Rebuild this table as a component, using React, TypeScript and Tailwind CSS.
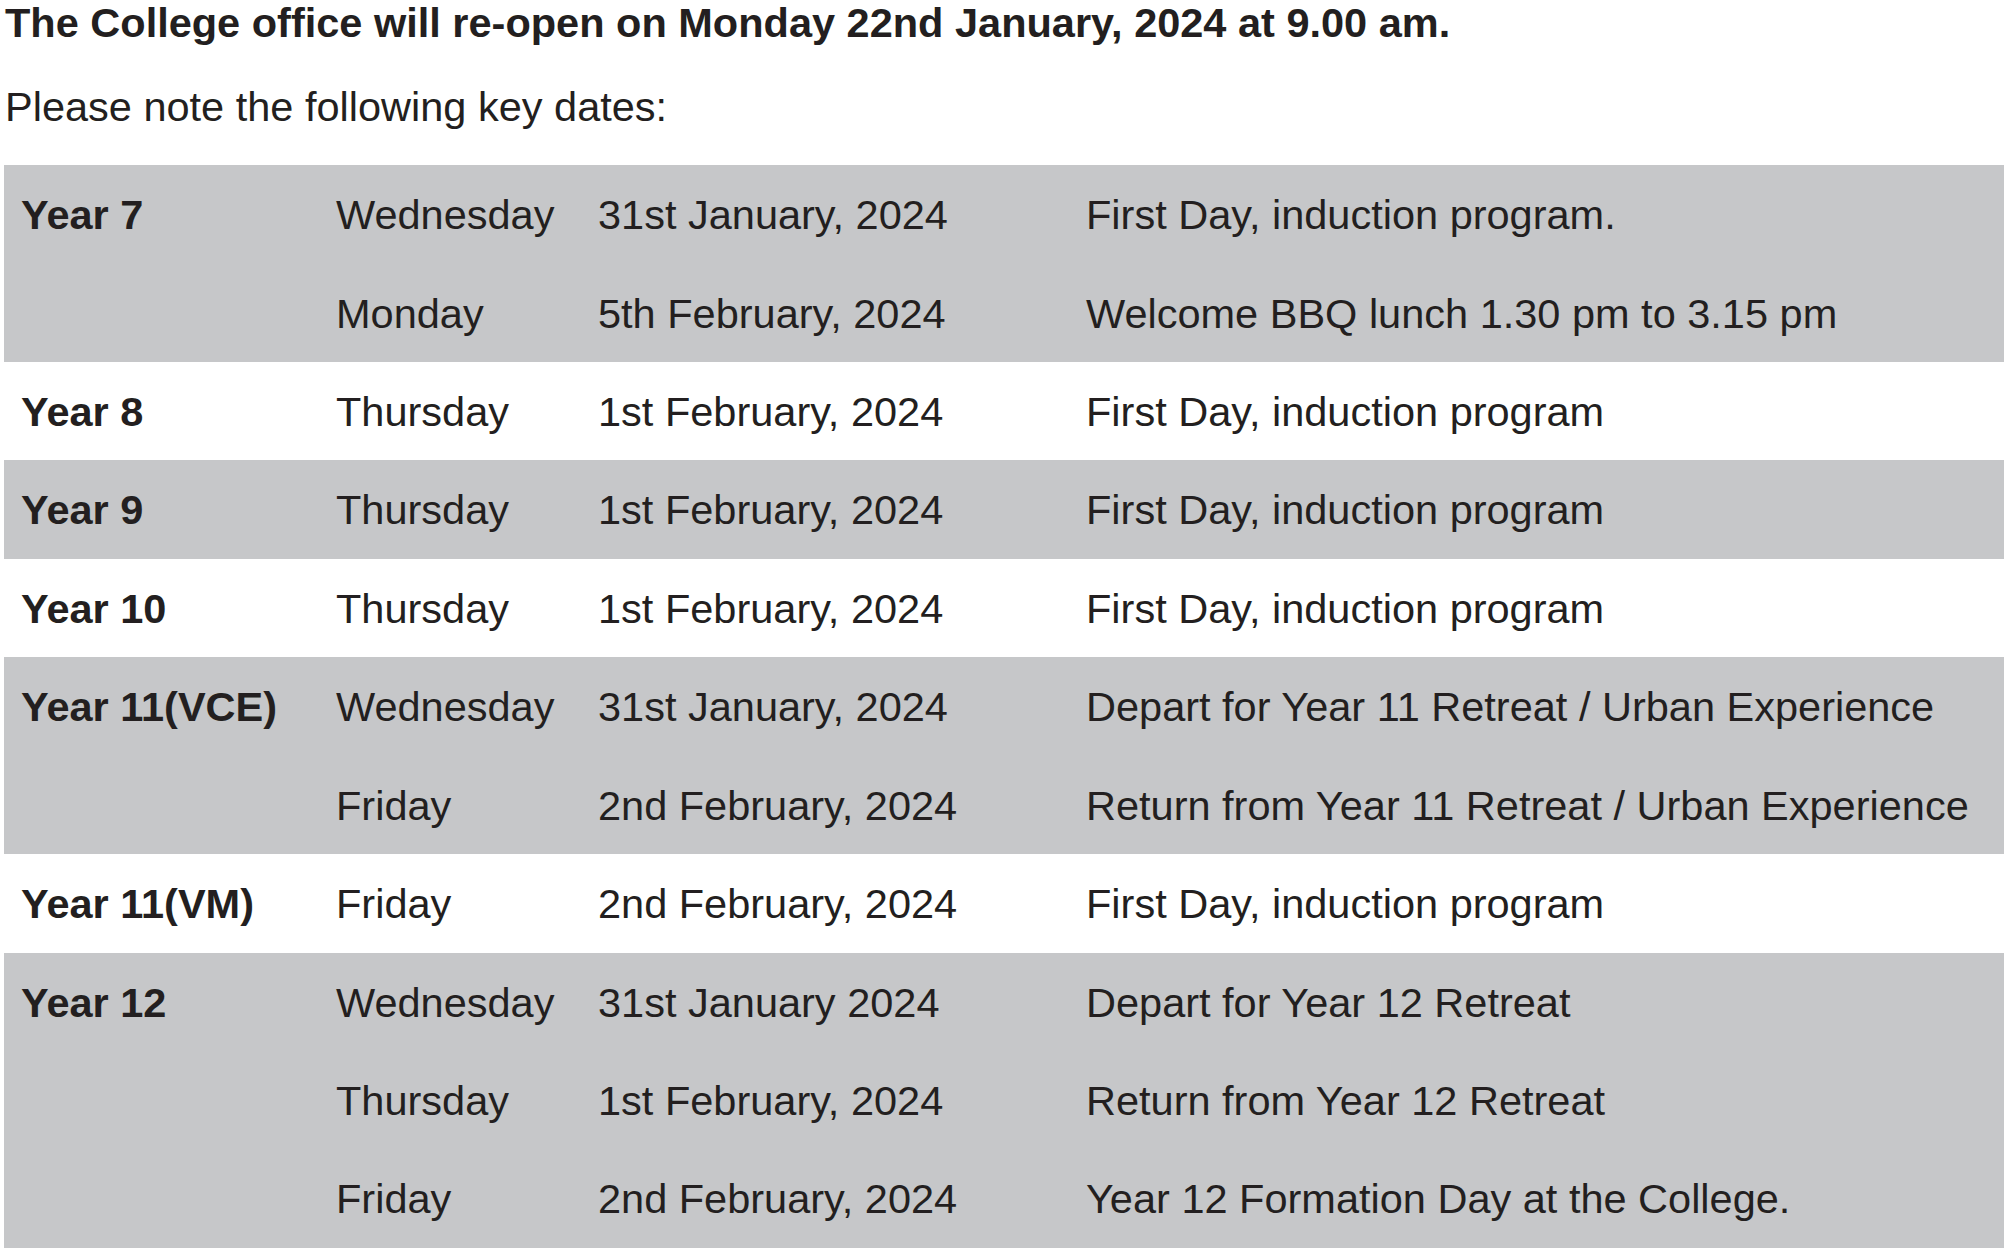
type Line = { day: string; date: string; note: string };
type Group = { label: string; shaded: boolean; lines: Line[] };

const groups: Group[] = [
  {
    label: "Year 7",
    shaded: true,
    lines: [
      { day: "Wednesday", date: "31st January, 2024", note: "First Day, induction program." },
      { day: "Monday", date: "5th February, 2024", note: "Welcome BBQ lunch 1.30 pm to 3.15 pm" },
    ],
  },
  {
    label: "Year 8",
    shaded: false,
    lines: [{ day: "Thursday", date: "1st February, 2024", note: "First Day, induction program" }],
  },
  {
    label: "Year 9",
    shaded: true,
    lines: [{ day: "Thursday", date: "1st February, 2024", note: "First Day, induction program" }],
  },
  {
    label: "Year 10",
    shaded: false,
    lines: [{ day: "Thursday", date: "1st February, 2024", note: "First Day, induction program" }],
  },
  {
    label: "Year 11(VCE)",
    shaded: true,
    lines: [
      { day: "Wednesday", date: "31st January, 2024", note: "Depart for Year 11 Retreat / Urban Experience" },
      { day: "Friday", date: "2nd February, 2024", note: "Return from Year 11 Retreat / Urban Experience" },
    ],
  },
  {
    label: "Year 11(VM)",
    shaded: false,
    lines: [{ day: "Friday", date: "2nd February, 2024", note: "First Day, induction program" }],
  },
  {
    label: "Year 12",
    shaded: true,
    lines: [
      { day: "Wednesday", date: "31st January 2024", note: "Depart for Year 12 Retreat" },
      { day: "Thursday", date: "1st February, 2024", note: "Return from Year 12 Retreat" },
      { day: "Friday", date: "2nd February, 2024", note: "Year 12 Formation Day at the College." },
    ],
  },
];

export default function App() {
  return (
    <main className="h-[1248px] w-[2004px] overflow-hidden bg-white font-['Liberation_Sans',Arial,sans-serif] text-[41.5px] text-[#231f20]">
      <h1 className="pl-[5px] pt-[2px] font-bold leading-[42px]">
        The College office will re-open on Monday 22nd January, 2024 at 9.00 am.
      </h1>
      <p className="mt-[41px] mb-[37px] pl-[5px] leading-[43px]">
        Please note the following key dates:
      </p>

      <div className="ml-[4px]">
        {groups.map((g) => (
          <div
            key={g.label}
            className={`grid grid-cols-[332px_262px_488px_1fr] ${g.shaded ? "bg-[#c6c7c9]" : "bg-white"}`}
          >
            <div className="pl-[17px] font-bold">
              <div className="flex h-[98.45px] items-center whitespace-nowrap pt-[2px]">{g.label}</div>
            </div>
            <div className="col-span-3">
              {g.lines.map((l) => (
                <div
                  key={l.day + l.note}
                  className="grid h-[98.45px] grid-cols-[262px_488px_1fr] items-center whitespace-nowrap pt-[2px]"
                >
                  <span>{l.day}</span>
                  <span>{l.date}</span>
                  <span>{l.note}</span>
                </div>
              ))}
            </div>
          </div>
        ))}
      </div>
    </main>
  );
}
